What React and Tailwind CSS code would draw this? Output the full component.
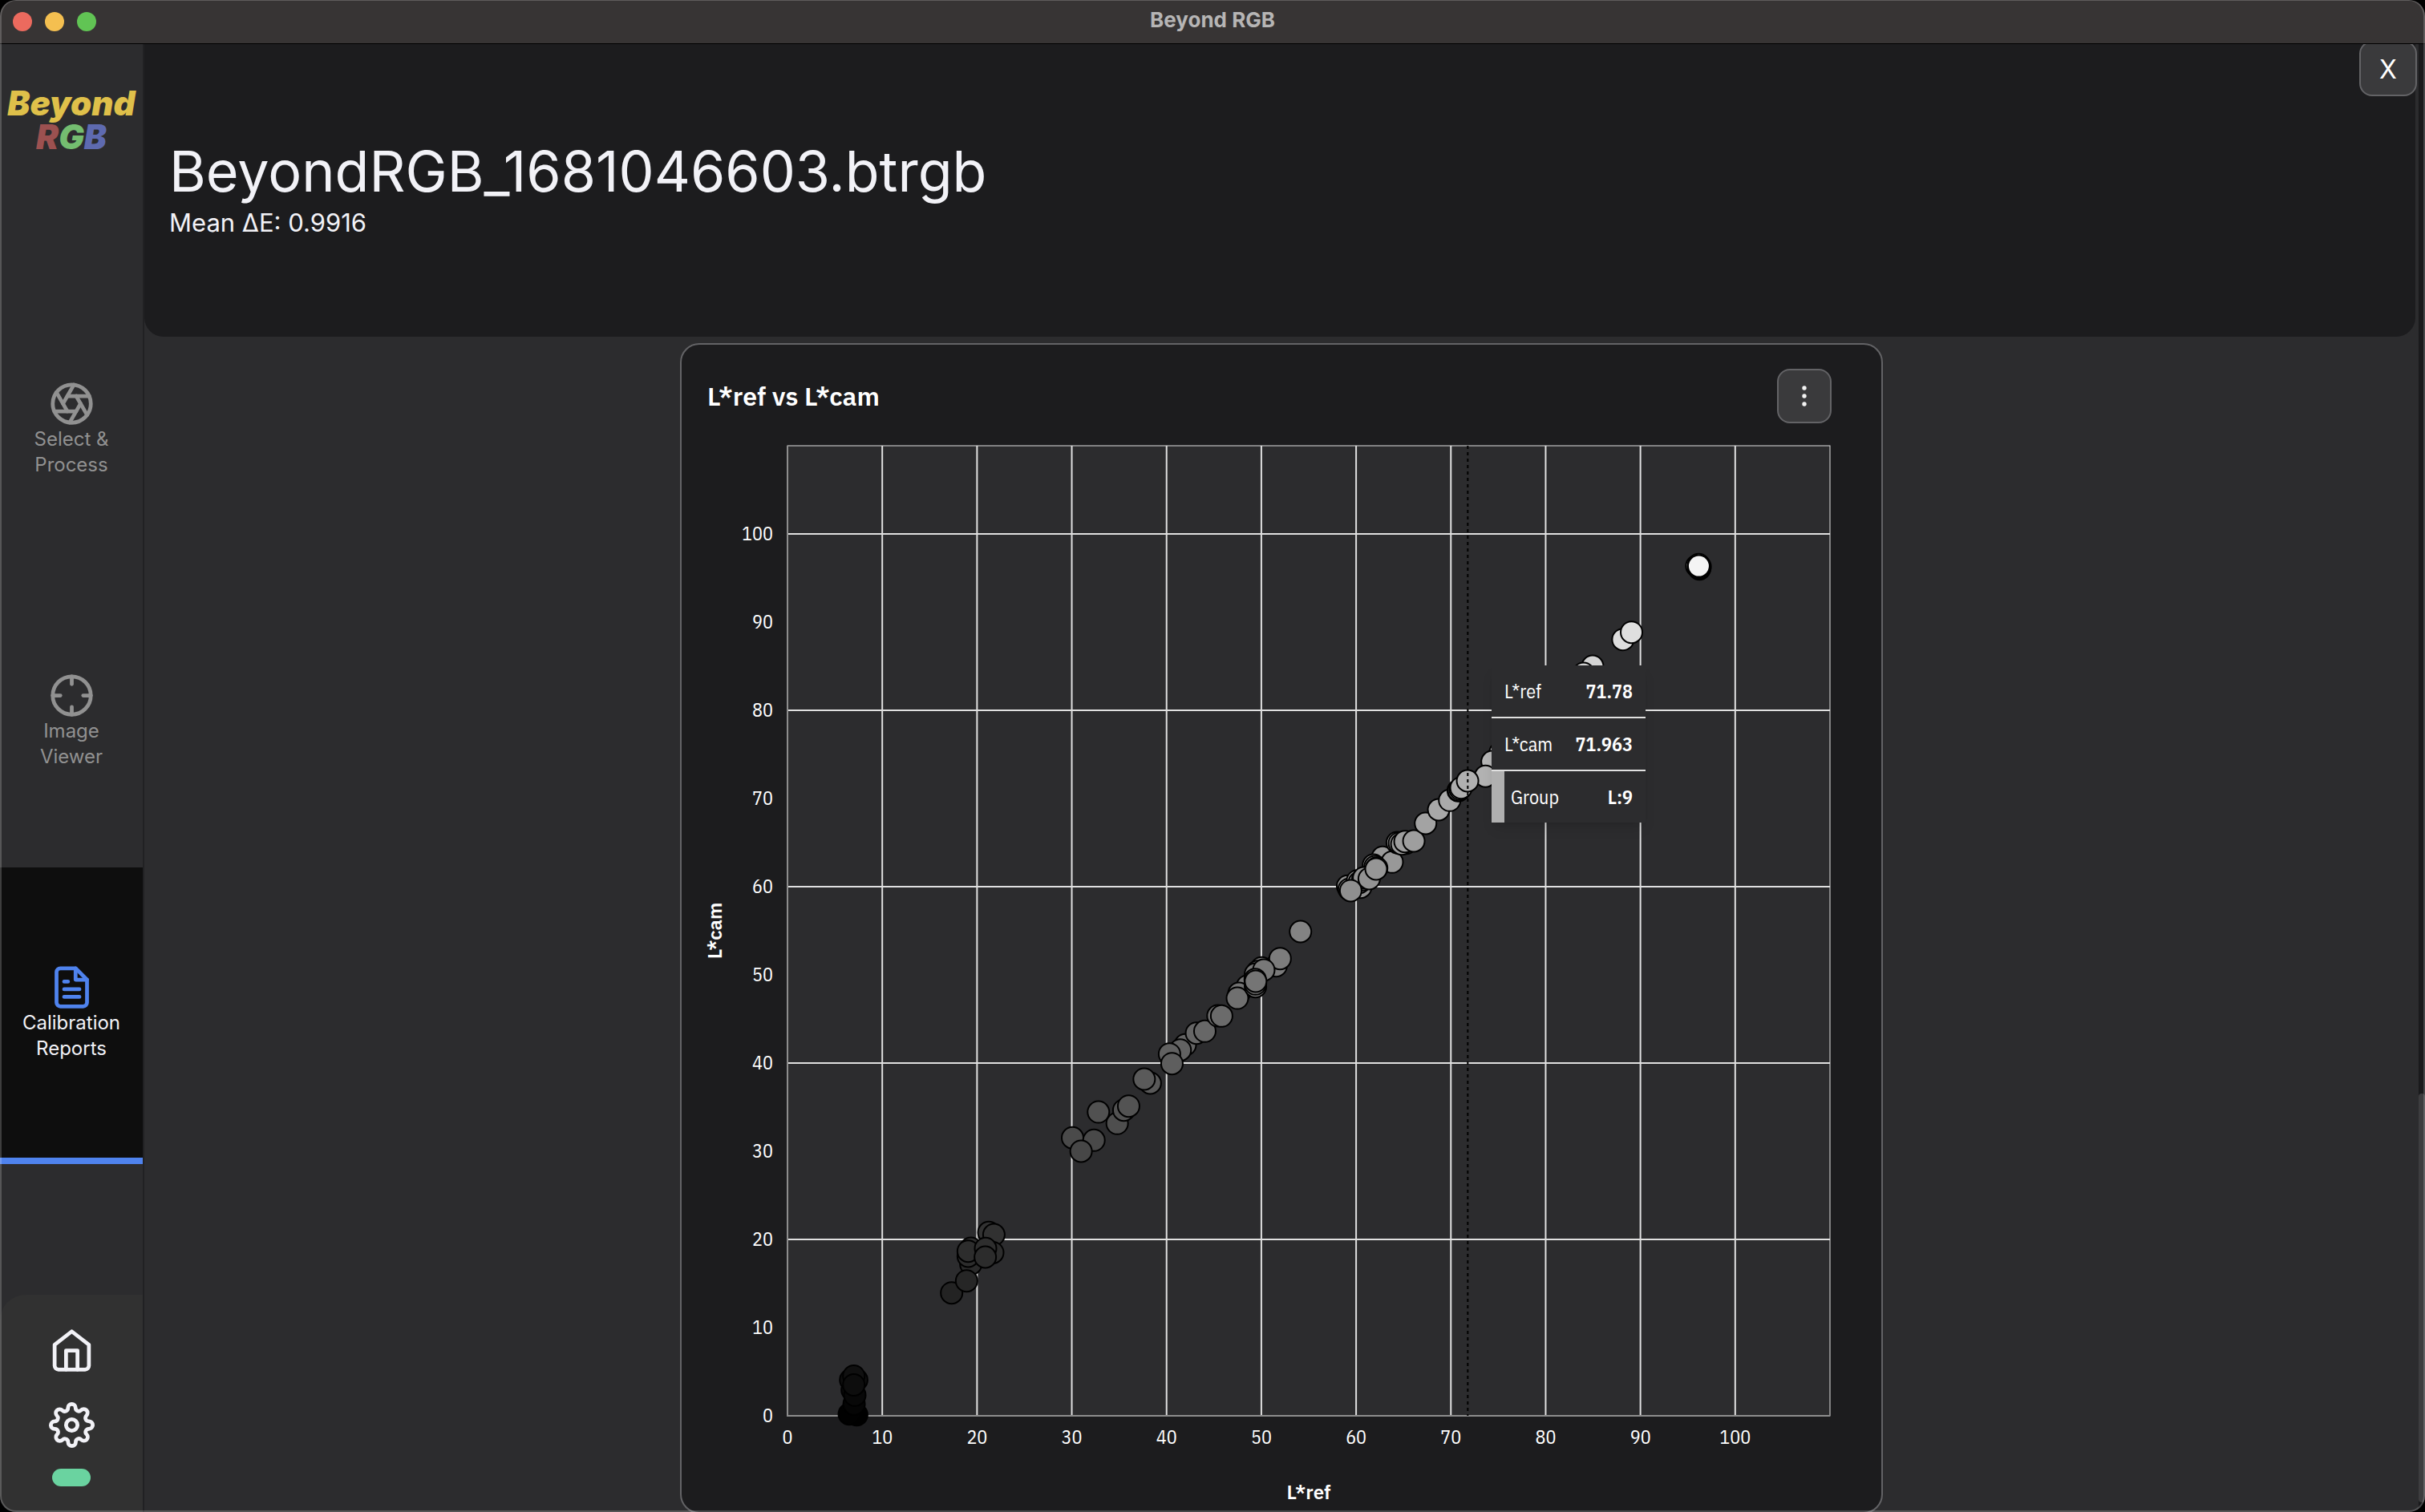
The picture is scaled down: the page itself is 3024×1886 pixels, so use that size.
import React from "react";
import { FiAperture, FiCrosshair, FiFileText, FiHome, FiSettings } from "react-icons/fi";

const PLOT_WIDTH = 1300;
const PLOT_HEIGHT = 1210;
const AXIS_MAX = 110;

const toX = (value) => (value / AXIS_MAX) * PLOT_WIDTH;
const toY = (value) => PLOT_HEIGHT - (value / AXIS_MAX) * PLOT_HEIGHT;

// [L*ref, L*cam] of every patch, in drawing order
const patches = [
  [7.31, 0.12], [6.52, 0.21], [7.03, 1.33], [6.83, 2.93], [7.11, 2.33], [6.66, 4.06], [7.31, 4.06], [7.0, 4.51], [7.0, 3.51],
  [21.24, 20.79], [21.78, 20.54], [21.66, 18.51], [19.35, 17.21], [19.35, 19.0], [19.07, 18.09], [19.07, 18.67],
  [20.9, 18.97], [20.87, 18.0], [17.32, 13.94], [18.9, 15.3],
  [30.08, 31.52], [32.34, 31.24], [30.98, 30.0], [32.81, 34.45], [34.79, 33.15], [35.49, 34.67], [36.0, 35.12],
  [38.28, 37.73], [37.64, 38.18],
  [41.97, 42.06], [41.44, 41.48], [40.31, 41.03], [40.57, 39.94],
  [43.16, 43.39], [44.04, 43.61], [45.42, 45.36], [45.81, 45.33],
  [48.52, 48.73], [47.64, 47.91], [47.47, 47.36],
  [51.56, 51.03], [51.98, 51.85], [50.03, 50.79], [49.61, 50.39], [49.38, 50.09], [50.26, 50.55],
  [49.38, 48.67], [49.38, 48.97], [49.35, 49.48], [49.4, 49.27],
  [54.13, 54.91],
  [62.79, 63.33], [63.8, 62.79], [61.83, 62.45], [62.0, 62.27], [62.17, 62.12],
  [59.1, 60.06], [59.26, 59.7], [60.14, 60.67], [60.48, 59.94], [60.34, 60.48], [60.7, 60.79], [60.81, 61.0],
  [61.38, 60.91], [59.43, 59.55], [62.11, 62.0],
  [64.34, 65.0], [64.57, 64.94], [65.27, 64.94], [64.82, 64.85], [65.16, 65.12], [66.09, 65.18],
  [67.33, 67.18], [68.71, 68.73], [69.87, 69.79], [70.77, 70.88], [70.83, 70.94], [70.97, 71.06], [71.08, 71.21],
  [75.2, 75.2], [74.35, 74.18], [73.65, 72.52], [71.76, 72.0],
  [84.95, 85.0], [84.0, 84.18],
  [88.16, 88.03], [89.06, 88.85],
  [95.94, 96.36], [96.3, 96.3], [96.15, 96.52], [96.22, 96.03], [96.26, 96.12], [96.2, 96.2], [96.1, 96.28], [96.16, 96.36],
];

// CIE lightness to an sRGB grey
function greyOf(lightness) {
  const f = (lightness + 16) / 116;
  const y = lightness > 8 ? f * f * f : lightness / 903.3;
  const channel = y <= 0.0031308 ? 12.92 * y : 1.055 * Math.pow(y, 1 / 2.4) - 0.055;
  const level = Math.round(channel * 255);
  return `rgb(${level},${level},${level})`;
}

const xTicks = [0, 10, 20, 30, 40, 50, 60, 70, 80, 90, 100];
const yGrid = [20, 40, 60, 80, 100];

function ScatterChart() {
  return (
    <svg viewBox="0 0 1402 1330" role="img" aria-label="Scatter chart of L*ref against L*cam" className="block w-full overflow-visible">
      <g transform="translate(100 8)">
        <rect width={PLOT_WIDTH} height={PLOT_HEIGHT} fill="#2c2c2e" stroke="#e0e0e0" strokeWidth="1" />
        <g stroke="#e0e0e0" strokeWidth="2">
          {xTicks.slice(1).map((t) => (
            <line key={t} x1={toX(t)} x2={toX(t)} y1="0" y2={PLOT_HEIGHT} />
          ))}
          {yGrid.map((t) => (
            <line key={t} x1="0" x2={PLOT_WIDTH} y1={toY(t)} y2={toY(t)} />
          ))}
        </g>
        <path d={`M0 0V${PLOT_HEIGHT}H${PLOT_WIDTH}`} fill="none" stroke="#8d8d8d" strokeWidth="2" />
        <g stroke="#000" strokeWidth="2">
          {patches.map(([ref, cam], i) => (
            <circle key={i} cx={toX(ref)} cy={toY(cam)} r="13.5" fill={greyOf(cam)} />
          ))}
        </g>
        <line x1={toX(71.78)} x2={toX(71.78)} y1="0" y2={PLOT_HEIGHT} stroke="#000" strokeWidth="2" strokeDasharray="4 4" />
      </g>
      <g fill="#fff" fontSize="24" className="font-['IBM_Plex_Sans_Condensed','IBM_Plex_Sans','Noto_Sans',sans-serif]">
        {xTicks.map((t) => (
          <text key={`x${t}`} x={100 + toX(t)} y="1253" textAnchor="middle">{t}</text>
        ))}
        {xTicks.map((t) => (
          <text key={`y${t}`} x="82" y={8 + toY(t) + 8} textAnchor="end">{t}</text>
        ))}
      </g>
      <g fill="#fff" fontSize="24" fontWeight="600" textAnchor="middle">
        <text x="750" y="1322">L*ref</text>
        <text transform="translate(18 613) rotate(-90)">L*cam</text>
      </g>
    </svg>
  );
}

function NavItem({ icon: Icon, label, active }) {
  return (
    <a
      href="#"
      aria-current={active ? "page" : undefined}
      className={
        active
          ? "flex flex-col items-center border-b-8 border-[#4f83ee] bg-[#0e0e0e] pt-[121px] pb-[120px] text-[#f2f2f7]"
          : "flex flex-col items-center pt-[121px] pb-[122px] text-[#919191]"
      }
    >
      <Icon size={57} className={active ? "text-[#4f83ee]" : ""} />
      <span className="w-32 text-center text-2xl/8">{label}</span>
    </a>
  );
}

function Sidebar() {
  return (
    <aside className="flex w-[180px] shrink-0 flex-col border-r-2 border-[#212123] bg-[#2c2c2e]">
      <div className="flex flex-col items-center pt-[53px] text-[42px]/[42px] font-black italic">
        <span className="text-[#dfc04a]">Beyond</span>
        <span>
          <span className="text-[#9c5150]">R</span>
          <span className="text-[#74bd70]">G</span>
          <span className="text-[#5e6ab0]">B</span>
        </span>
      </div>
      <nav className="mt-[162px] flex flex-col">
        <NavItem icon={FiAperture} label="Select & Process" />
        <NavItem icon={FiCrosshair} label="Image Viewer" />
        <NavItem icon={FiFileText} label="Calibration Reports" active />
      </nav>
      <div className="mt-auto flex flex-col items-center rounded-tl-[32px] bg-[#313131] pt-[41px] pb-8 text-[#f2f2f7]">
        <button type="button" aria-label="Home"><FiHome size={57} /></button>
        <button type="button" aria-label="Settings" className="mt-9"><FiSettings size={57} /></button>
        <span className="mt-[26px] h-[22px] w-12 rounded-full bg-[#6ad3a0]" />
      </div>
    </aside>
  );
}

function Tooltip() {
  return (
    <dl className="absolute top-[282px] left-[978px] w-48 divide-y-2 divide-[#e0e0e0] bg-[#2c2c2e] font-['IBM_Plex_Sans_Condensed','IBM_Plex_Sans','Noto_Sans',sans-serif] text-2xl/8 text-white shadow-lg">
      <div className="flex justify-between px-4 py-4"><dt>L*ref</dt><dd className="font-semibold">71.78</dd></div>
      <div className="flex justify-between px-4 py-4"><dt>L*cam</dt><dd className="font-semibold">71.963</dd></div>
      <div className="flex">
        <span className="w-4 bg-[#b0b0b0]" />
        <div className="flex grow justify-between py-4 pr-4 pl-2"><dt>Group</dt><dd className="font-semibold">L:9</dd></div>
      </div>
    </dl>
  );
}

export default function App() {
  return (
    <div className="h-screen bg-black">
      <div className="relative flex h-full flex-col overflow-hidden rounded-[20px] bg-[#2c2c2e] font-['Inter',sans-serif] text-[#f2f2f7]">
        <header className="grid h-[55px] shrink-0 grid-cols-3 items-center border-b border-black bg-[#373434] px-4">
          <div className="flex gap-4">
            <button type="button" aria-label="Close window" className="size-6 rounded-full bg-[#ec6a5e]" />
            <button type="button" aria-label="Minimize window" className="size-6 rounded-full bg-[#f4bf50]" />
            <button type="button" aria-label="Zoom window" className="size-6 rounded-full bg-[#61c454]" />
          </div>
          <div className="pb-1 text-center text-[26px]/8 font-bold text-[#b6b5b5]">Beyond RGB</div>
        </header>

        <div className="flex min-h-0 grow">
          <Sidebar />
          <main className="relative min-w-0 grow overflow-hidden">
            <section className="mr-1 rounded-b-3xl bg-[#1c1c1e] px-[31px] pt-[117px] pb-[122px]">
              <h1 className="text-[70px]/[84px]">BeyondRGB_1681046603.btrgb</h1>
              <p className="mt-0.5 text-[31px]/10">Mean ΔE: 0.9916</p>
            </section>
            <button type="button" className="absolute -top-1 right-0.5 h-[69px] w-[72px] rounded-2xl border-2 border-[#636366] bg-[#3a3a3c] pt-0.5 text-[32px]/8 text-white">
              X
            </button>

            <section className="mx-auto mt-2 w-[1500px] max-w-full rounded-3xl border-2 border-[#636366] bg-[#1c1c1e] pt-[30px] pr-[62px] pb-2 pl-8 font-['IBM_Plex_Sans','Noto_Sans',sans-serif]">
              <div className="flex items-center justify-between">
                <h2 className="text-[32px]/10 font-semibold text-white">L*ref vs L*cam</h2>
                <button type="button" aria-label="Chart options" className="grid size-[68px] place-items-center rounded-2xl border-2 border-[#636366] bg-[#3a3a3c]">
                  <svg width="6" height="26" viewBox="0 0 6 26" fill="#f2f2f2">
                    <circle cx="3" cy="3" r="2.7" />
                    <circle cx="3" cy="13" r="2.7" />
                    <circle cx="3" cy="23" r="2.7" />
                  </svg>
                </button>
              </div>
              <div className="relative mt-5">
                <ScatterChart />
                <Tooltip />
              </div>
            </section>
          </main>
          <div className="flex w-2 shrink-0 flex-col bg-[#1a1a1c] pb-3">
            <div className="mt-auto h-[510px] rounded-full bg-[#3d3d3f]" />
          </div>
        </div>
        <div className="pointer-events-none absolute inset-0 rounded-[20px] border-2 border-t border-white/20" />
      </div>
    </div>
  );
}
